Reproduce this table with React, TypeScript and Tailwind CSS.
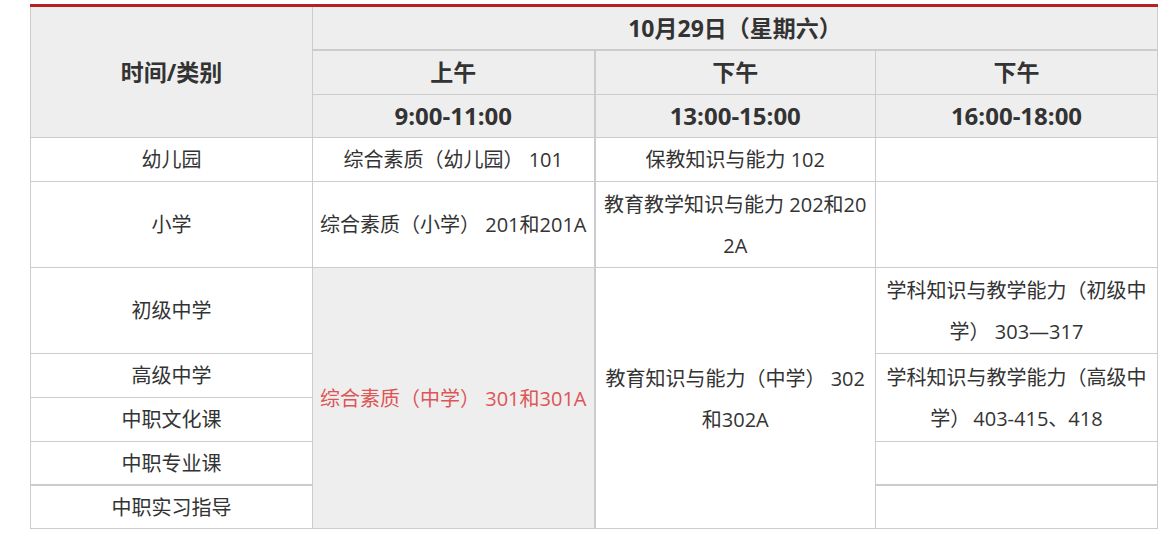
import React from "react";

const cell = "border border-[#cccccc] text-center align-middle p-0 px-[4px] whitespace-nowrap";
const hcell = cell + " leading-[42px]";
const dcell = cell + " pt-[2px] leading-[40px]";
const mcell = cell + " pt-[2px] leading-[41px]";

export default function App() {
  return (
    <div
      className="w-[1172px] h-[544px] bg-white pt-[4px] pl-[30px] text-[#333333]"
      style={{ fontFamily: '"Open Sans", "Noto Sans CJK SC", sans-serif' }}
    >
      <table className="table-fixed border-collapse w-[1127px] border-t-[3px] border-t-[#b22222] text-[20px] leading-[40px]">
        <colgroup>
          <col className="w-[282px]" />
          <col className="w-[282px]" />
          <col className="w-[281px]" />
          <col className="w-[282px]" />
        </colgroup>
        <tbody>
          <tr className="h-[43px] bg-[#eeeeee] font-bold text-[23px]">
            <td rowSpan={3} className={hcell + " border-t-0"}>时间/类别</td>
            <td colSpan={3} className={hcell + " border-t-0 border-b-2"}>10月29日（星期六）</td>
          </tr>
          <tr className="h-[44px] bg-[#eeeeee] font-bold text-[23px]">
            <td className={hcell}>上午</td>
            <td className={hcell + " border-l-2"}>下午</td>
            <td className={hcell}>下午</td>
          </tr>
          <tr className="h-[43px] bg-[#eeeeee] font-bold text-[24px]">
            <td className={hcell}>9:00-11:00</td>
            <td className={hcell + " border-l-2"}>13:00-15:00</td>
            <td className={hcell}>16:00-18:00</td>
          </tr>
          <tr className="h-[44px]">
            <td className={dcell}>幼儿园</td>
            <td className={dcell}>综合素质（幼儿园） 101</td>
            <td className={dcell + " border-l-2"}>保教知识与能力 102</td>
            <td className={dcell}></td>
          </tr>
          <tr className="h-[86px]">
            <td className={dcell}>小学</td>
            <td className={dcell}>综合素质（小学） 201和201A</td>
            <td className={mcell + " border-l-2"}>
              教育教学知识与能力 202和20
              <br />
              2A
            </td>
            <td className={dcell}></td>
          </tr>
          <tr className="h-[86px]">
            <td className={dcell}>初级中学</td>
            <td rowSpan={5} className={dcell + " bg-[#eeeeee] text-[#dd5555]"}>
              综合素质（中学） 301和301A
            </td>
            <td rowSpan={5} className={mcell + " border-l-2"}>
              教育知识与能力（中学） 302
              <br />
              和302A
            </td>
            <td className={mcell}>
              学科知识与教学能力（初级中
              <br />
              学） 303—317
            </td>
          </tr>
          <tr className="h-[44px]">
            <td className={dcell}>高级中学</td>
            <td rowSpan={2} className={mcell}>
              学科知识与教学能力（高级中
              <br />
              学）<span className="ml-[3px]">403-415、418</span>
            </td>
          </tr>
          <tr className="h-[44px]">
            <td className={dcell}>中职文化课</td>
          </tr>
          <tr className="h-[44px]">
            <td className={dcell + " border-b-2"}>中职专业课</td>
            <td className={dcell + " border-b-2"}></td>
          </tr>
          <tr className="h-[43px]">
            <td className={dcell}>中职实习指导</td>
            <td className={dcell}></td>
          </tr>
        </tbody>
      </table>
    </div>
  );
}
